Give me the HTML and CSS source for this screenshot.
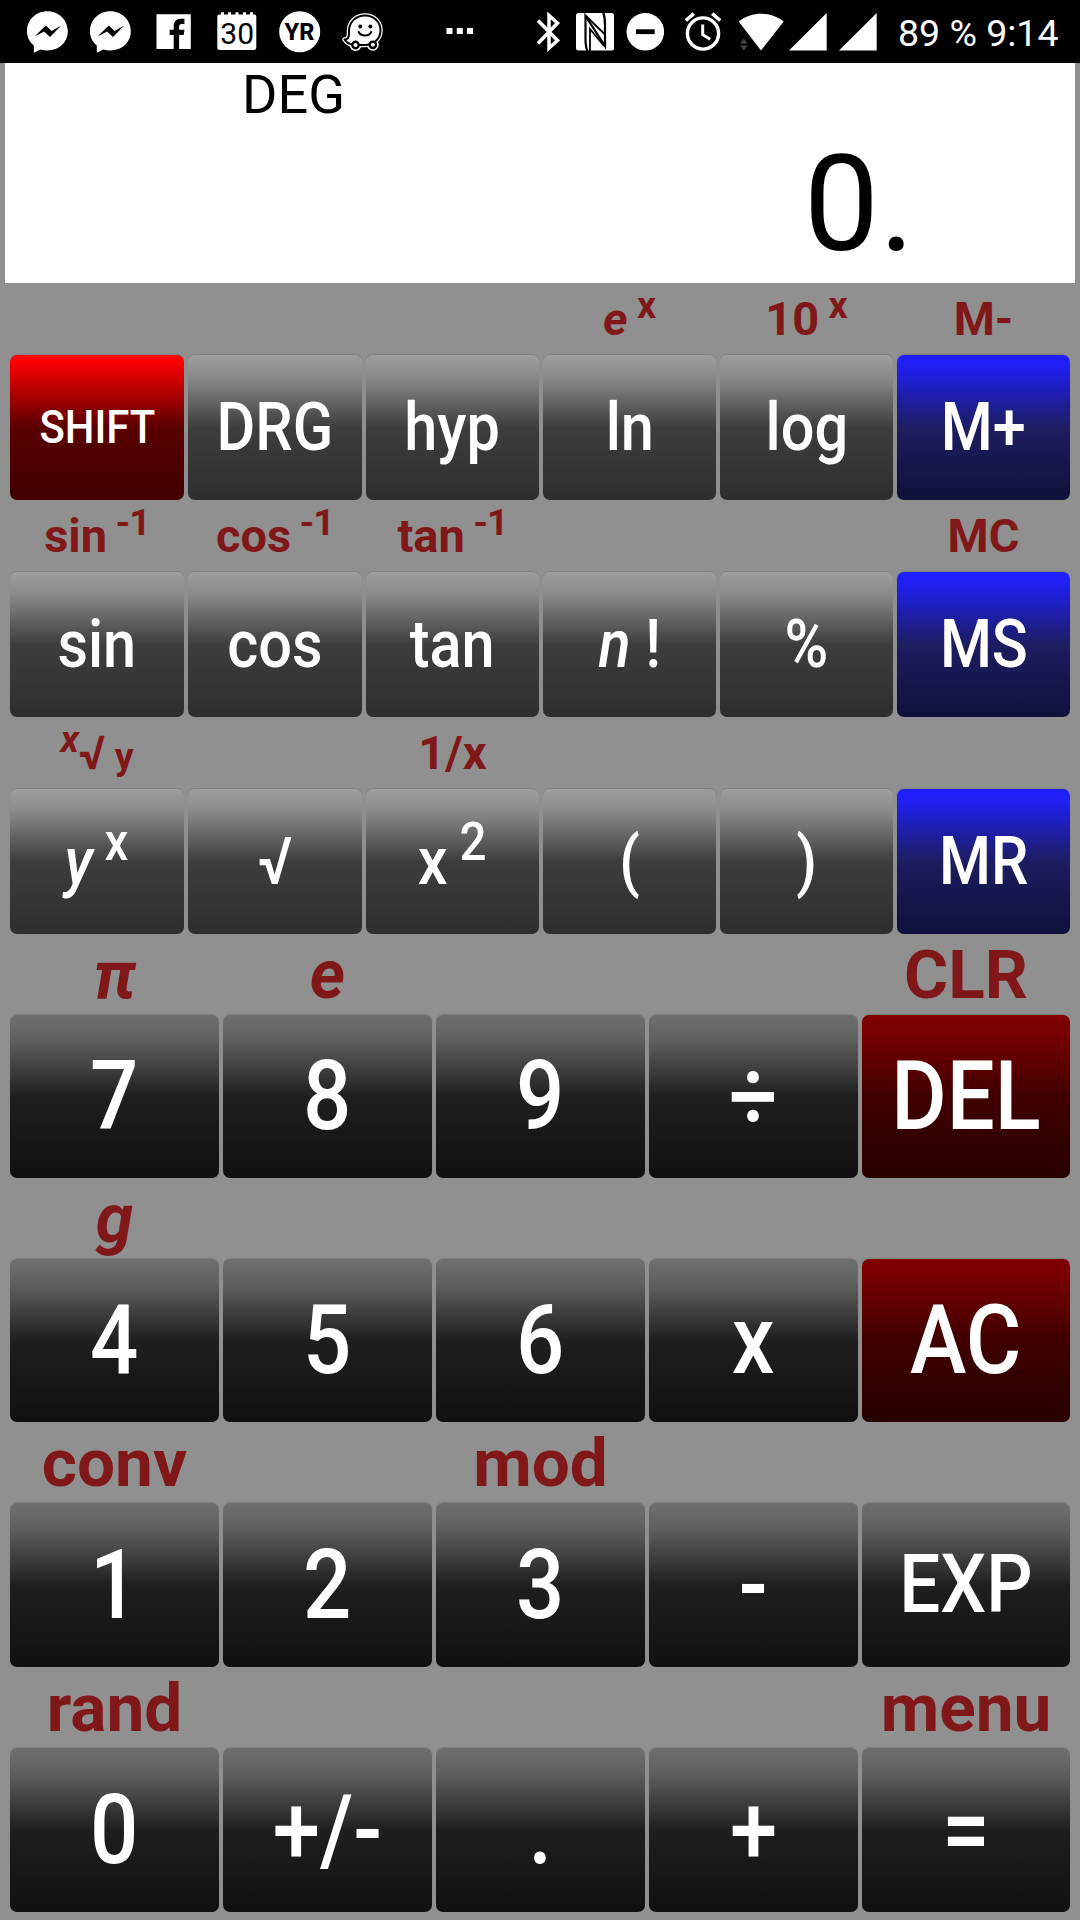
FILE: index.html
```
<!DOCTYPE html>
<html lang="en">
<head>
<meta charset="utf-8">
<title>Scientific calculator</title>
<link rel="stylesheet" href="styles.css">
</head>
<body>
<header class="status">
  <div class="notifications">
    <svg class="slot" viewBox="0 0 63 63"><path fill="#fff" d="M31.5 11.3C20 11.300 11 19.800 11 31.300c0 6 2.500 10.600 6.800 14.100l.1 7.300 6.500-3.200c2.200.7 4.600 1 7.100 1C43 50.500 51.800 42.300 51.800 31.300S43 11.300 31.500 11.300z"/><path fill="#000" d="M18.500 36.500 29.800 25.500l5.700 5.400 9.800-5.400L34 37l-5.900-5.600z"/></svg>
    <svg class="slot" viewBox="0 0 63 63"><path fill="#fff" d="M31.500 11.300C20 11.300 11 19.800 11 31.300c0 6 2.500 10.600 6.800 14.100l.1 7.300 6.500-3.200c2.200.7 4.600 1 7.100 1C43 50.500 51.800 42.300 51.800 31.300S43 11.300 31.500 11.300z"/><path fill="#000" d="M18.500 36.500 29.800 25.500l5.700 5.400 9.800-5.400L34 37l-5.900-5.600z"/></svg>
    <svg class="slot" viewBox="0 0 63 63"><path fill="#fff" d="M14.500 14.300h34.300v34.700H14.500z"/><path fill="#000" d="M31.700 49V35h-4v-5.200h4v-3.300c0-5 2.700-7.700 7.300-7.700h3.400v5.100h-2.600c-2 0-2.700 1-2.700 2.800v3.100h5.400l-.8 5.200h-4.600v14z"/></svg>
    <svg class="slot" viewBox="0 0 63 63"><path fill="#fff" d="M14.700 14.500h1.300v-2.300h3v2.300h4v-2.300h3v2.300h4.500v-2.300h3v2.300H38v-2.300h3v2.300h4v-2.300h3v2.300h1.300a2 2 0 0 1 2 2v31a2.500 2.500 0 0 1-2.500 2.500h-34a2.500 2.500 0 0 1-2.500-2.500v-31a2 2 0 0 1 2.400-2z"/><text class="calendar-day" x="32.200" y="43.700">30</text></svg>
    <svg class="slot" viewBox="0 0 63 63"><circle cx="31.700" cy="31.700" r="20.500" fill="#fff"/><text class="brand" x="31.500" y="40.300">YR</text></svg>
    <svg class="slot" viewBox="0 0 63 63"><g stroke-linejoin="round"><path fill="#fff" stroke="#fff" stroke-width="4.500" d="M34 15.500c9 0 15.500 6.500 15.500 15 0 8.500-7 14.500-15.500 14.500h-9c-5 0-9.500-2.500-11.500-5.500 3 0 4.500-2 4.500-6v-2.500c0-9 7-15.500 16-15.500z"/><g fill="#fff"><circle cx="24.500" cy="45" r="6"/><circle cx="41.800" cy="44.800" r="6"/></g><path fill="#fff" stroke="#000" stroke-width="2" d="M34 15.500c9 0 15.500 6.500 15.500 15 0 8.500-7 14.500-15.500 14.500h-9c-5 0-9.500-2.500-11.500-5.500 3 0 4.500-2 4.500-6v-2.500c0-9 7-15.500 16-15.500z"/><g fill="#fff" stroke="#000" stroke-width="2.400"><circle cx="24.500" cy="45" r="3.200"/><circle cx="41.800" cy="44.800" r="3.200"/></g></g><circle cx="29.300" cy="26.500" r="1.900"/><circle cx="39.300" cy="26.500" r="1.900"/><path fill="none" stroke="#000" stroke-width="2" stroke-linecap="round" d="M27.700 32c2 4.600 10.500 4.600 12.600-.2"/></svg>
    <svg class="more" viewBox="0 0 28 63"><path fill="#fff" d="M.5 28h6v6h-6zM10.800 28h6v6h-6zM21 28h6v6h-6z"/></svg>
  </div>
  <div class="system">
    <svg class="bluetooth" viewBox="0 0 26 63"><path fill="none" stroke="#fff" stroke-width="3.500" d="M2 20.500 21.500 40.500 13 48V15.500l8.500 7.500L2 43.500"/></svg>
    <svg class="nfc" viewBox="0 0 38 63"><rect y="13" width="38" height="37.500" rx="2.500" fill="#fff"/><path fill="none" stroke="#000" stroke-width="2.200" d="M11.500 51c-1.500-3-2-7-2-12V16l19.500 30V25c0-5-.5-9-1.800-12.500"/><path fill="none" stroke="#000" stroke-width="1.800" d="M10 16 28.500 34M14 51V29l14 17"/></svg>
    <svg class="dnd" viewBox="0 0 39 63"><circle cx="19.300" cy="31.800" r="18.800" fill="#fff"/><path d="M10 29.300h18.700v4.800H10z"/></svg>
    <svg class="alarm" viewBox="0 0 38 63"><g fill="none" stroke="#fff"><circle cx="19" cy="33.500" r="15.600" stroke-width="3.400"/><path stroke-width="3" d="M18.700 24.500v10.200l7.500 4.600"/><path stroke-width="3.600" d="m1.800 20.500 8-6.800M36.200 20.500l-8-6.800"/></g></svg>
    <svg class="wifi" viewBox="0 0 46 63"><path fill="#fff" d="M.7 21.500C14 11.200 32.500 11.200 45.700 21.500L23 50.500z"/><path fill="#444" d="m2 43.500 3.800-5 3.800 5zM2 45.500h7.600l-3.800 5z"/></svg>
    <svg class="signal" viewBox="0 0 38 63"><path fill="#fff" d="M0 50.500 37.700 13v37.500z"/></svg>
    <svg class="signal" viewBox="0 0 38 63"><path fill="#fff" d="M0 50.500 37.700 13v37.500z"/></svg>
    <span class="clock">89 % 9:14</span>
  </div>
</header>

<main class="calculator">
  <section class="display">
    <div class="mode">DEG</div>
    <div class="value">0.</div>
  </section>

  <section class="functions">
    <div class="labels"><span></span><span></span><span></span><span><i>e</i><sup> x</sup></span><span>10<sup> x</sup></span><span>M-</span></div>
    <div class="keys">
      <button class="key shift"><span>SHIFT</span></button><button class="key"><span>DRG</span></button><button class="key"><span>hyp</span></button><button class="key"><span>ln</span></button><button class="key"><span>log</span></button><button class="key memory"><span>M+</span></button>
    </div>
    <div class="labels"><span>sin<sup class="inverse"> -1</sup></span><span>cos<sup class="inverse"> -1</sup></span><span>tan<sup class="inverse"> -1</sup></span><span></span><span></span><span>MC</span></div>
    <div class="keys">
      <button class="key"><span>sin</span></button><button class="key"><span>cos</span></button><button class="key"><span>tan</span></button><button class="key"><span><i>n</i> !</span></button><button class="key"><span>%</span></button><button class="key memory"><span>MS</span></button>
    </div>
    <div class="labels"><span><sup><i>x</i></sup>√<small> y</small></span><span></span><span>1/x</span><span></span><span></span><span></span></div>
    <div class="keys">
      <button class="key"><span><i>y</i><sup> x</sup></span></button><button class="key"><span>√</span></button><button class="key"><span>x<sup> 2</sup></span></button><button class="key"><span>(</span></button><button class="key"><span>)</span></button><button class="key memory"><span>MR</span></button>
    </div>
  </section>

  <section class="numbers">
    <div class="labels"><span><i>π</i></span><span><i>e</i></span><span></span><span></span><span>CLR</span></div>
    <div class="keys">
      <button class="key"><span>7</span></button><button class="key"><span>8</span></button><button class="key"><span>9</span></button><button class="key"><span>÷</span></button><button class="key clear"><span>DEL</span></button>
    </div>
    <div class="labels"><span><i>g</i></span><span></span><span></span><span></span><span></span></div>
    <div class="keys">
      <button class="key"><span>4</span></button><button class="key"><span>5</span></button><button class="key"><span>6</span></button><button class="key"><span>x</span></button><button class="key clear"><span>AC</span></button>
    </div>
    <div class="labels"><span>conv</span><span></span><span>mod</span><span></span><span></span></div>
    <div class="keys tall">
      <button class="key"><span>1</span></button><button class="key"><span>2</span></button><button class="key"><span>3</span></button><button class="key"><span>-</span></button><button class="key exponent"><span>EXP</span></button>
    </div>
    <div class="labels"><span>rand</span><span></span><span></span><span></span><span>menu</span></div>
    <div class="keys tall">
      <button class="key"><span>0</span></button><button class="key"><span>+/-</span></button><button class="key"><span>.</span></button><button class="key"><span>+</span></button><button class="key"><span>=</span></button>
    </div>
  </section>
</main>
</body>
</html>
```
FILE: styles.css
```
* { box-sizing: border-box; }

body {
  margin: 0;
  width: 1080px;
  height: 1920px;
  overflow: hidden;
  background: #909090;
  font-family: Roboto, "Liberation Sans", sans-serif;
}

svg { display: block; flex: none; height: 63px; }

/* status bar */
.status {
  display: flex;
  justify-content: space-between;
  height: 63px;
  padding: 0 21.500px 0 15.500px;
  background: #000;
  color: #fff;
}
.notifications, .system { display: flex; }
.slot { width: 63px; }
.more { width: 28px; margin-left: 52.500px; }
.calendar-day { font-size: 30px; font-weight: 400; text-anchor: middle; }
.brand { font-size: 23.500px; font-weight: 800; text-anchor: middle; }
.bluetooth { width: 26px; margin-right: 14px; }
.nfc { width: 38px; margin-right: 12.500px; }
.dnd { width: 39px; margin-right: 18.500px; }
.alarm { width: 38px; margin-right: 16.500px; }
.wifi { width: 46px; margin-right: 4.500px; }
.signal { width: 38px; margin-right: 12px; }
.clock { margin-left: 9px; font-size: 37.500px; line-height: 66.500px; white-space: nowrap; }

/* display */
.calculator { padding: 0 5px; }
.display {
  height: 220px;
  background: #fff;
  color: #000;
}
.mode {
  height: 63px;
  padding-left: 237px;
  font-size: 54px;
  line-height: 63px;
}
.value {
  height: 157px;
  padding-right: 160.500px;
  font-size: 134px;
  line-height: 157px;
  text-align: right;
}

/* keypad */
.functions, .numbers { padding: 0 5px; }
.labels, .keys {
  display: grid;
  grid-template-columns: repeat(2, 174px) repeat(4, 173px);
  gap: 4px;
}
.numbers .labels, .numbers .keys { grid-template-columns: repeat(4, 209px) 208px; }

.labels {
  height: 72px;
  color: #801719;
  font-size: 47px;
  font-weight: 700;
  line-height: 72px;
  text-align: center;
  white-space: pre;
}
.numbers .labels {
  height: 81px;
  font-size: 67.500px;
  line-height: 81px;
}
sup, small { font-size: .8em; line-height: 0; }
sup { vertical-align: 17px; }
.inverse { letter-spacing: -1px; }
.keys sup { vertical-align: 24px; }

.key {
  height: 145px;
  margin: 0;
  padding: 0;
  border: 0;
  border-radius: 7px;
  background: linear-gradient(#9d9d9d, #8b8b8b 15%, #3d3d3d 50%, #2e2e2e);
  box-shadow: 0 -1px 1px rgba(0, 0, 0, .12);
  color: #fff;
  font: 540 66px/1.172 Roboto, "Liberation Sans", sans-serif;
  white-space: pre;
}
.key > span { display: inline-block; transform: scaleX(.9); }
.shift {
  background: linear-gradient(#f00, #f00 4%, #5a0000 50%, #400000);
  font-size: 46.500px;
}
.memory { background: linear-gradient(#1f1fff, #1f1ff4 8%, #1d1d60 50%, #10103c); }
.numbers .key {
  height: 163px;
  background: linear-gradient(#6f6f6f, #606060 15%, #1f1f1f 50%, #101010);
  font-size: 95.600px;
}
.numbers .key > span { transform: scaleX(.89); }
.numbers .tall .key { height: 164px; }
.numbers .clear { background: linear-gradient(#800000, #780000 10%, #400000 50%, #280000); }
.numbers .exponent { font-size: 81.700px; }
```
